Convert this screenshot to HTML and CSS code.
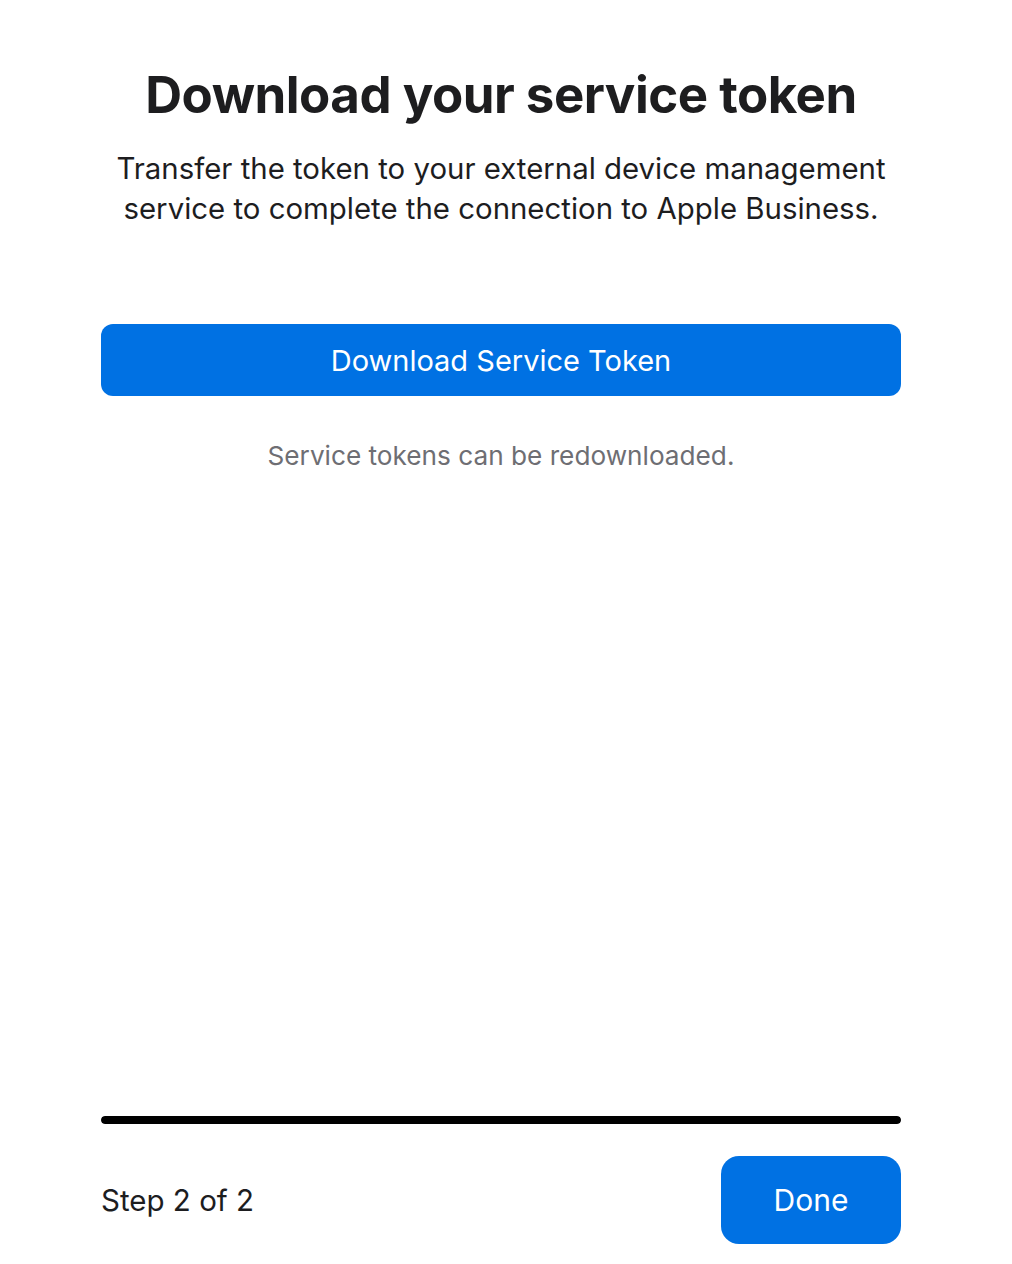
FILE: index.html
```html
<!DOCTYPE html>
<html lang="en">
<head>
  <meta charset="UTF-8" />
  <meta name="viewport" content="width=device-width, initial-scale=1.0"/>
  <title>Download your service token</title>
  <link rel="stylesheet" href="styles.css">
</head>
<body>
  <div class="page">
    <div class="content">
      <h1>Download your service token</h1>
      <p class="lead">Transfer the token to your external device management service to complete the connection to Apple Business.</p>
      <button class="primary-btn">Download Service Token</button>
      <p class="note">Service tokens can be redownloaded.</p>
    </div>

    <div class="footer">
      <div class="progress"><div class="progress-fill" style="width: 100%;"></div></div>
      <div class="footer-row">
        <span class="step">Step 2 of 2</span>
        <button class="done-btn">Done</button>
      </div>
    </div>
  </div>
</body>
</html>
```

FILE: styles.css
```css
body {
  margin: 0;
  font-family: Inter, 'Noto Sans', sans-serif;
  color: #1d1d1f;
  background: #fff;
}

.page {
  display: flex;
  flex-direction: column;
  min-height: 100vh;
  box-sizing: border-box;
  width: 800px;
  margin: 0 0 0 101px;
  padding: 66px 0 20px;
}

.content {
  display: flex;
  flex-direction: column;
  align-items: center;
  text-align: center;
}

h1 {
  margin: 0;
  font-size: 51px;
  line-height: 58px;
  font-weight: 700;
  letter-spacing: -0.5px;
}

.lead {
  margin: 25px 0 0;
  width: 800px;
  font-size: 29.4px;
  line-height: 40px;
}

.primary-btn {
  margin-top: 95px;
  width: 800px;
  height: 72px;
  border: none;
  border-radius: 12px;
  background: #0071e3;
  color: #fff;
  font-family: inherit;
  font-size: 29px;
  cursor: pointer;
}

.note {
  margin: 44px 0 0;
  font-size: 26.2px;
  line-height: 32px;
  color: #6e6e73;
}

/* bottom bar: progress + step counter */
.footer {
  margin-top: auto;
}

.progress {
  height: 8px;
  border-radius: 4px;
  background: #d2d2d7;
  overflow: hidden;
}

.progress-fill {
  height: 100%;
  background: #000;
  border-radius: 4px;
}

.footer-row {
  display: flex;
  align-items: center;
  justify-content: space-between;
  margin-top: 32px;
}

.step {
  font-size: 29.5px;
}

.done-btn {
  width: 180px;
  height: 88px;
  border: none;
  border-radius: 18px;
  background: #0071e3;
  color: #fff;
  font-family: inherit;
  font-size: 30px;
  cursor: pointer;
}
```
